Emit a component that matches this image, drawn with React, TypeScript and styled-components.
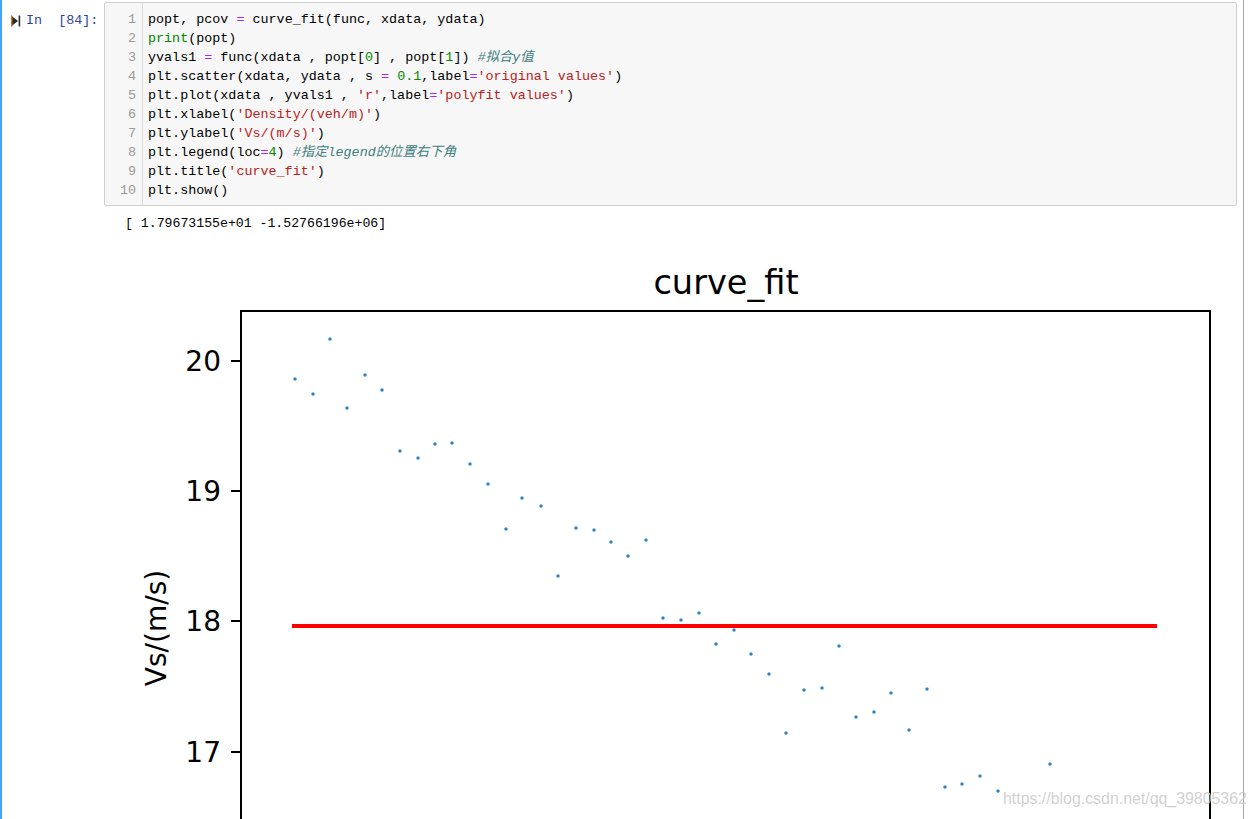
import styled, { createGlobalStyle } from 'styled-components'

const GlobalStyle = createGlobalStyle`
  html, body {
    margin: 0;
    padding: 0;
    background: #fff;
    overflow: hidden;
  }
`

type Tok = [string, string?]

// token kinds: k = builtin, o = operator, n = number, s = string, c = comment
const code: Tok[][] = [
  [['popt, pcov '], ['=', 'o'], [' curve_fit(func, xdata, ydata)']],
  [['print', 'k'], ['(popt)']],
  [['yvals1 '], ['=', 'o'], [' func(xdata , popt['], ['0', 'n'], ['] , popt['], ['1', 'n'], [']) '], ['#拟合y值', 'c']],
  [['plt.scatter(xdata, ydata , s '], ['=', 'o'], [' '], ['0.1', 'n'], [',label'], ['=', 'o'], ["'original values'", 's'], [')']],
  [['plt.plot(xdata , yvals1 , '], ["'r'", 's'], [',label'], ['=', 'o'], ["'polyfit values'", 's'], [')']],
  [['plt.xlabel('], ["'Density/(veh/m)'", 's'], [')']],
  [['plt.ylabel('], ["'Vs/(m/s)'", 's'], [')']],
  [['plt.legend(loc'], ['=', 'o'], ['4', 'n'], [') '], ['#指定legend的位置右下角', 'c']],
  [['plt.title('], ["'curve_fit'", 's'], [')']],
  [['plt.show()']],
]

const points: [number, number][] = [
  [295, 379], [313, 394], [330, 339], [347, 408], [365, 375], [382, 390],
  [400, 451], [418, 458], [435, 444], [452, 443], [470, 464], [488, 484],
  [506, 529], [522, 498], [541, 506], [558, 576], [576, 528], [594, 530],
  [611, 542], [628, 556], [646, 540], [663, 618], [681, 620], [699, 613],
  [716, 644], [734, 630], [751, 654], [769, 674], [786, 733], [804, 690],
  [822, 688], [839, 646], [856, 717], [874, 712], [891, 693], [909, 730],
  [927, 689], [945, 787], [962, 784], [980, 776], [998, 791], [1050, 764],
]

const ticks = [
  { label: '20', y: 361 },
  { label: '19', y: 491 },
  { label: '18', y: 621 },
  { label: '17', y: 752 },
]

const FIG_X = 104
const FIG_Y = 245

export default function App() {
  return (
    <>
      <GlobalStyle />
      <Page>
        <Notebook>
          <Cell>
            <InputRow>
              <Prompt>
                <RunIcon width="10" height="12" viewBox="0 0 10 12">
                  <path d="M0 0.5 L7 6 L0 11.5 Z" fill="#2b2b2b" />
                  <rect x="0" y="0.5" width="1.4" height="11" fill="#c77a1e" />
                  <rect x="7.6" y="0.5" width="1.6" height="11" fill="#2b2b2b" />
                </RunIcon>
                In&nbsp;&nbsp;[84]:
              </Prompt>
              <CodeBox>
                <Gutter>
                  {code.map((_, i) => (
                    <LineNo key={i}>{i + 1}</LineNo>
                  ))}
                </Gutter>
                <CodeLines>
                  {code.map((line, i) => (
                    <CodeLine key={i}>
                      {line.map(([text, kind], j) => (
                        <Token key={j} kind={kind}>{text}</Token>
                      ))}
                    </CodeLine>
                  ))}
                </CodeLines>
              </CodeBox>
            </InputRow>

            <OutputRow>
              <OutputText>[ 1.79673155e+01 -1.52766196e+06]</OutputText>
              <Figure width={1140} height={580} viewBox="0 0 1140 580">
                <g transform={`translate(${-FIG_X},${-FIG_Y})`}>
                  <text x={726} y={294} fontSize={33.6} textAnchor="middle" fill="#000" fontFamily="DejaVu Sans, sans-serif">
                    curve_fit
                  </text>
                  <rect x={241} y={311} width={969} height={600} fill="none" stroke="#000" strokeWidth={2} />
                  {ticks.map((t) => (
                    <g key={t.label}>
                      <line x1={231} x2={241} y1={t.y} y2={t.y} stroke="#000" strokeWidth={2} />
                      <text x={221} y={t.y + 10} fontSize={28} textAnchor="end" fill="#000" fontFamily="DejaVu Sans, sans-serif">
                        {t.label}
                      </text>
                    </g>
                  ))}
                  <text
                    x={166}
                    y={628}
                    fontSize={28}
                    textAnchor="middle"
                    fill="#000"
                    fontFamily="DejaVu Sans, sans-serif"
                    transform="rotate(-90 166 628)"
                  >
                    Vs/(m/s)
                  </text>
                  {points.map(([x, y], i) => (
                    <circle key={i} cx={x} cy={y} r={1.6} fill="#2f7fbf" stroke="#6aa6d6" strokeWidth={0.5} />
                  ))}
                  <line x1={292} x2={1157} y1={626} y2={626} stroke="#ff0000" strokeWidth={4} />
                </g>
              </Figure>
            </OutputRow>
          </Cell>
        </Notebook>
        <Watermark>https://blog.csdn.net/qq_39805362</Watermark>
      </Page>
    </>
  )
}

const Page = styled.div`
  position: relative;
  width: 1257px;
  height: 819px;
  overflow: hidden;
  background: #fff;
`

const Notebook = styled.div`
  width: 1244px;
  height: 100%;
  border-right: 1px solid #a8a8a8;
  box-sizing: border-box;
`

const Cell = styled.div`
  height: 100%;
  border-left: 2px solid #42a5f5;
  box-sizing: border-box;
`

const InputRow = styled.div`
  display: flex;
  align-items: flex-start;
  padding-top: 2px;
`

const Prompt = styled.div`
  width: 102px;
  box-sizing: border-box;
  display: flex;
  align-items: center;
  padding: 9px 0 0 9px;
  font-family: 'Liberation Mono', monospace;
  font-size: 13.4px;
  line-height: 19px;
  color: #303f9f;
  white-space: pre;
`

const RunIcon = styled.svg`
  margin-right: 5px;
  flex-shrink: 0;
`

const CodeBox = styled.div`
  flex: 1;
  margin-right: 6px;
  display: flex;
  background: #f7f7f7;
  border: 1px solid #cfcfcf;
  border-radius: 2px;
  height: 204px;
  box-sizing: border-box;
`

const Gutter = styled.div`
  width: 38px;
  padding: 7px 6px 0 0;
  box-sizing: border-box;
  border-right: 1px solid #dddddd;
  text-align: right;
`

const LineNo = styled.div`
  font-family: 'Liberation Mono', monospace;
  font-size: 13.4px;
  line-height: 19px;
  color: #999;
`

const CodeLines = styled.div`
  padding: 7px 0 0 5px;
`

const CodeLine = styled.div`
  font-family: 'Liberation Mono', 'Noto Sans CJK SC', monospace;
  font-size: 13.4px;
  line-height: 19px;
  color: #000;
  white-space: pre;
`

const tokenColors: Record<string, string> = {
  k: '#008000',
  o: '#aa22ff',
  n: '#008800',
  s: '#ba2121',
  c: '#408080',
}

const Token = styled.span<{ kind?: string }>`
  color: ${({ kind }) => (kind ? tokenColors[kind] : '#000')};
  font-style: ${({ kind }) => (kind === 'c' ? 'italic' : 'normal')};
`

const OutputRow = styled.div`
  display: flex;
  flex-direction: column;
  padding-left: 102px;
`

const OutputText = styled.div`
  padding: 9px 0 0 21px;
  font-family: 'Liberation Mono', monospace;
  font-size: 13.2px;
  line-height: 18px;
  color: #000;
  white-space: pre;
  height: 30px;
  box-sizing: border-box;
`

const Figure = styled.svg`
  display: block;
  margin-top: 9px;
`

const Watermark = styled.div`
  position: absolute;
  left: 1003px;
  top: 790px;
  font-family: 'Liberation Sans', Arial, sans-serif;
  font-size: 15.9px;
  color: rgba(200, 200, 200, 0.85);
  white-space: nowrap;
`
